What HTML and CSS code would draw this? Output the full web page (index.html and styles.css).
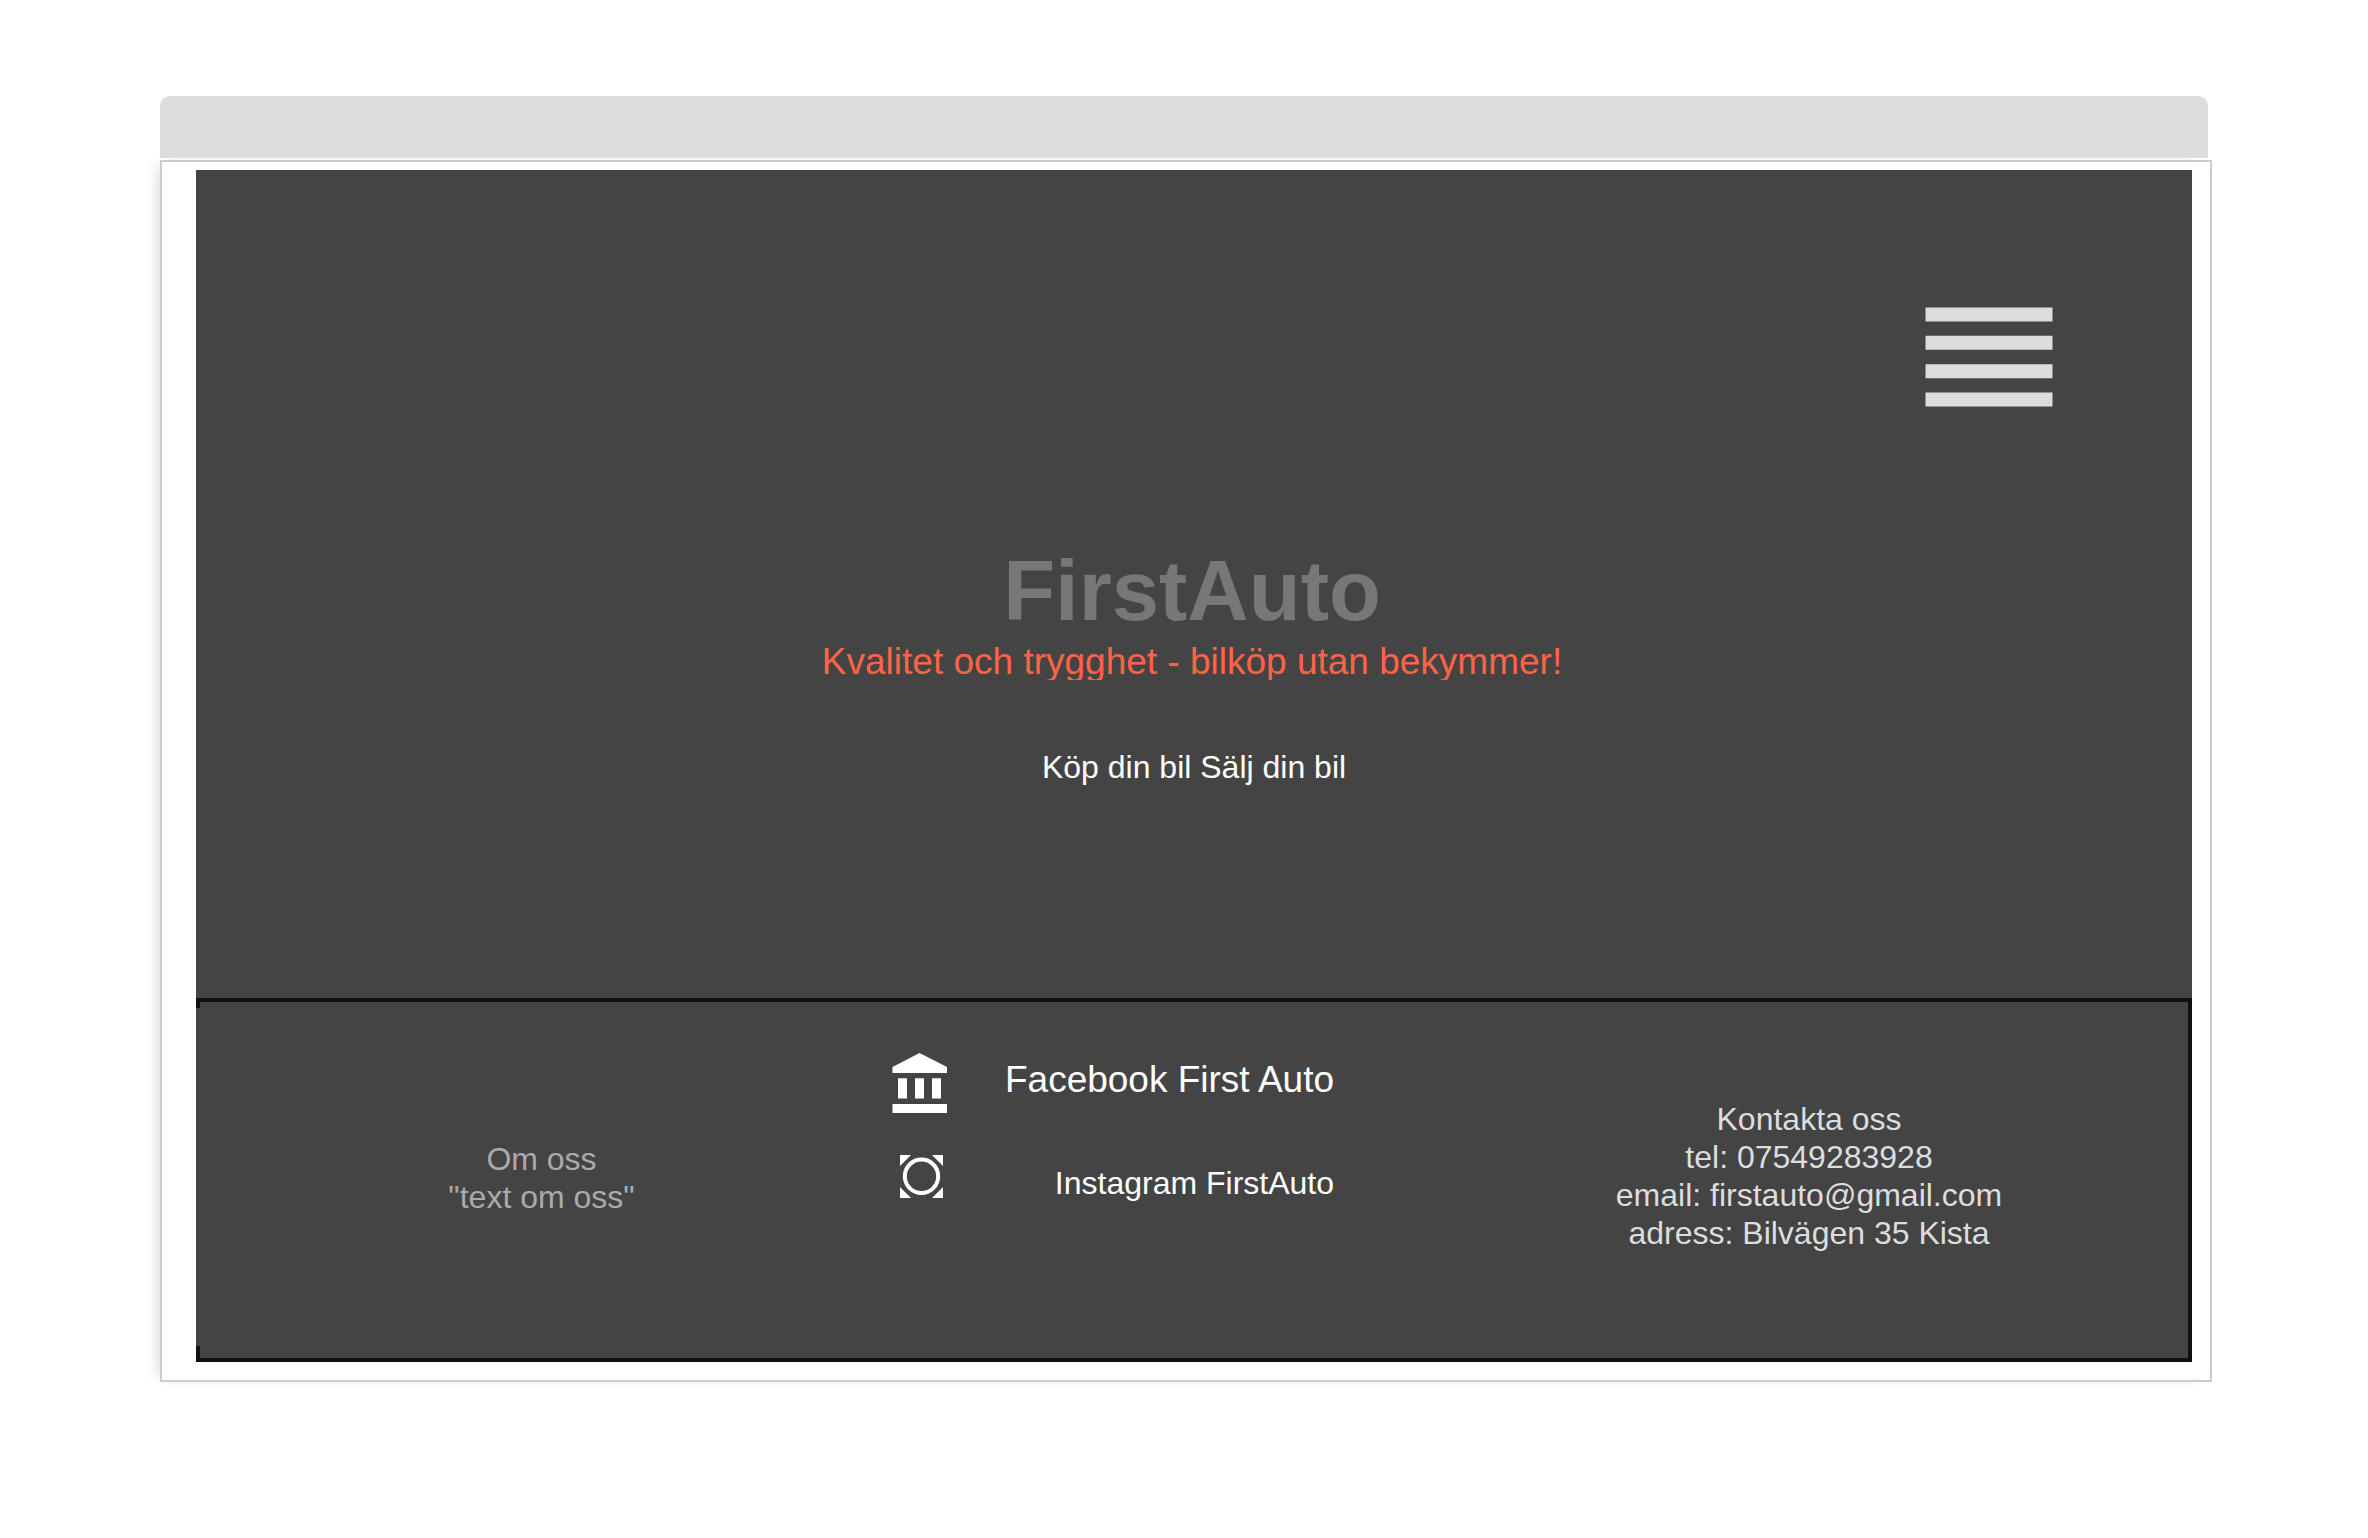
FILE: index.html
```html
<!DOCTYPE html>
<html lang="sv">
<head>
<meta charset="utf-8">
<meta name="viewport" content="width=device-width, initial-scale=1">
<title>FirstAuto</title>
<link rel="stylesheet" href="styles.css">
</head>
<body>
<div class="window">
  <div class="window-bar"></div>
  <div class="window-frame">
    <main class="hero">
      <nav class="hero-nav">
        <button class="menu-button" type="button" aria-label="Meny">
          <svg class="menu-icon" viewBox="0 0 128 100" aria-hidden="true">
            <path d="M.5.5h127v14H.5zM.5 28.8h127v14H.5zM.5 57.2h127v14H.5zM.5 85.5h127v14H.5z"/>
          </svg>
        </button>
      </nav>
      <div class="hero-heading">
        <h1 class="title">FirstAuto</h1>
        <p class="tagline">Kvalitet och trygghet - bilköp utan bekymmer!</p>
      </div>
      <p class="actions"><a href="#kop">Köp din bil</a> <a href="#salj">Sälj din bil</a></p>
    </main>
    <footer class="footer">
      <section class="about">
        <p>Om oss</p>
        <p>"text om oss"</p>
      </section>
      <ul class="social">
        <li class="social-row">
          <svg class="social-icon" viewBox="0 0 64 72" aria-hidden="true">
            <path d="M32.500 9L60 23v6H5.500v-6zM11 34.200h9v20.300h-9zM28 34.200h9v20.300h-9zM45 34.200h9v20.300h-9zM5.500 60H60v9H5.500z"/>
          </svg>
          <a class="social-main" href="#facebook">Facebook First Auto</a>
        </li>
        <li class="social-row">
          <svg class="social-icon" viewBox="0 0 64 72" aria-hidden="true">
            <path d="M13 8h11L13 19zM56 8v11L45 8zM13 51V40l11 11zM56 51H45l11-11z"/>
            <circle cx="34.500" cy="29.300" r="16.700" fill="none" stroke="#fff" stroke-width="4"/>
          </svg>
          <a href="#instagram">Instagram FirstAuto</a>
        </li>
      </ul>
      <address class="contact">
        <p>Kontakta oss</p>
        <p>tel: <a href="tel:07549283928">07549283928</a></p>
        <p>email: <a href="mailto:firstauto@gmail.com">firstauto@gmail.com</a></p>
        <p>adress: Bilvägen 35 Kista</p>
      </address>
    </footer>
  </div>
</div>
</body>
</html>
```
FILE: styles.css
```css
* {
  box-sizing: border-box;
}

body {
  margin: 0;
  padding: 96px 160px;
  background: #fff;
  font-family: "Liberation Sans", Arial, sans-serif;
  font-size: 32px;
  line-height: 38px;
  color: #fff;
}

h1,
p,
ul {
  margin: 0;
  padding: 0;
}

a {
  color: inherit;
  text-decoration: none;
}

.window-bar {
  position: relative;
  z-index: 1;
  height: 62px;
  border-radius: 10px 10px 0 0;
  background: #ddd;
}

.window-frame {
  margin: 2px -4px 0 0;
  padding: 8px 18px 18px 34px;
  border: 2px solid #ccc;
  background: #fff;
  box-shadow: -7px 0 14px -7px rgba(0, 0, 0, 0.2);
}

.hero {
  min-height: 828px;
  padding-top: 137px;
  background: #444;
  text-align: center;
}

.hero-nav {
  display: flex;
  justify-content: flex-end;
  padding-right: 139px;
}

.menu-button {
  display: block;
  padding: 0;
  border: 0;
  background: none;
  cursor: pointer;
}

.menu-icon {
  display: block;
  width: 128px;
  height: 100px;
  fill: #ddd;
}

.hero-heading {
  padding: 136px 4px 0 0;
}

.title {
  font-size: 85px;
  line-height: 96px;
  color: #777;
}

.tagline {
  height: 37px;
  margin-top: 4px;
  overflow: hidden;
  font-size: 37px;
  color: #ff6347;
}

.actions {
  margin-top: 68px;
}

.footer {
  position: relative;
  display: grid;
  grid-template-columns: 691fr 543fr 758fr;
  min-height: 364px;
  border: 4px solid #111;
  border-left: 0;
  background: #444;
}

/* short corner ends of the open left border */
.footer::before,
.footer::after {
  content: "";
  position: absolute;
  left: 0;
  width: 4px;
  background: #111;
}

.footer::before {
  top: 0;
  height: 6px;
}

.footer::after {
  bottom: 0;
  height: 12px;
}

.about,
.contact {
  align-self: center;
  text-align: center;
}

.about {
  padding-bottom: 4px;
  color: #aaa;
}

.contact {
  padding-bottom: 8px;
  font-style: normal;
  color: #ddd;
}

.social {
  display: flex;
  flex-direction: column;
  gap: 31px;
  padding: 42px 96px 0 0;
  list-style: none;
}

.social-row {
  display: flex;
  align-items: center;
  justify-content: space-between;
}

.social-icon {
  width: 64px;
  height: 72px;
  fill: #fff;
}

.social-main {
  font-size: 37px;
}
```
